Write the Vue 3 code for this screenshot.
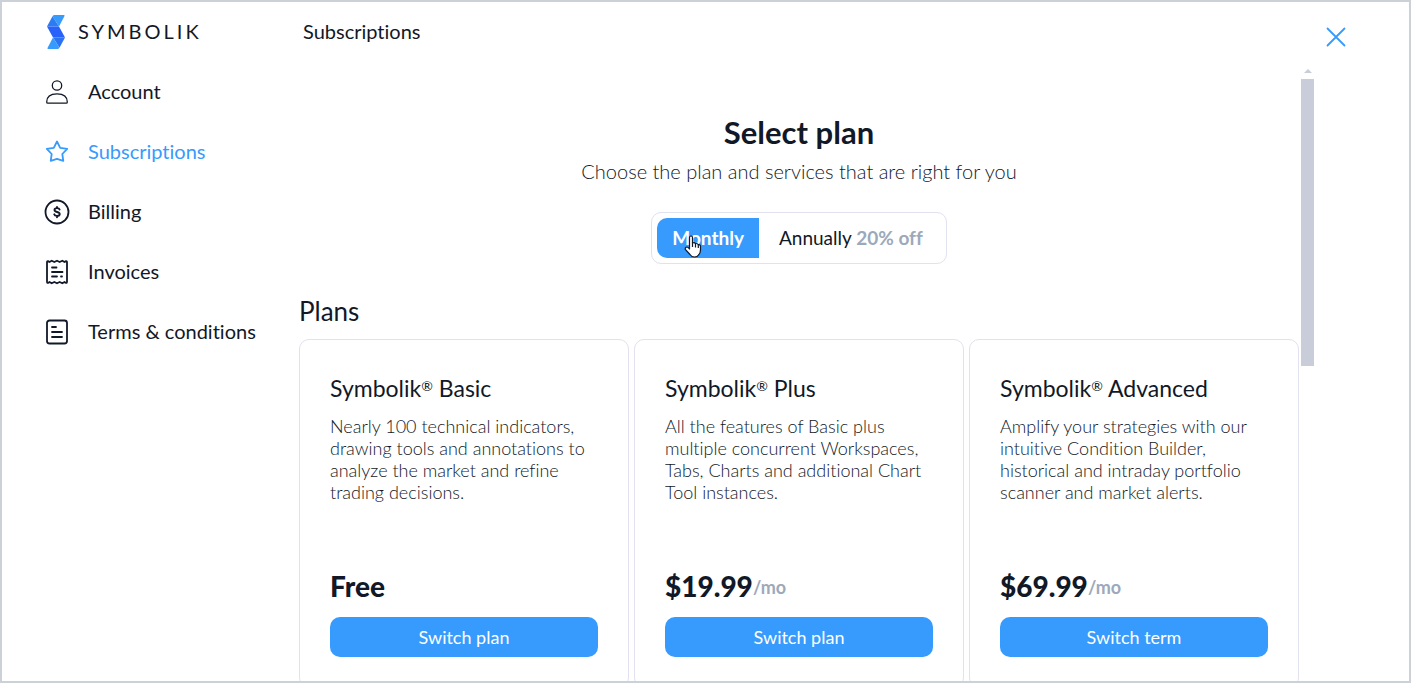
<script setup>
import { ref } from 'vue'

const term = ref('monthly')

const menu = [
  { id: 'account', label: 'Account' },
  { id: 'subscriptions', label: 'Subscriptions' },
  { id: 'billing', label: 'Billing' },
  { id: 'invoices', label: 'Invoices' },
  { id: 'terms', label: 'Terms & conditions' }
]
const active = ref('subscriptions')

const plans = [
  {
    name: 'Basic',
    lines: ['Nearly 100 technical indicators,', 'drawing tools and annotations to', 'analyze the market and refine', 'trading decisions.'],
    price: 'Free',
    unit: '',
    action: 'Switch plan'
  },
  {
    name: 'Plus',
    lines: ['All the features of Basic plus', 'multiple concurrent Workspaces,', 'Tabs, Charts and additional Chart', 'Tool instances.'],
    price: '$19.99',
    unit: '/mo',
    action: 'Switch plan'
  },
  {
    name: 'Advanced',
    lines: ['Amplify your strategies with our', 'intuitive Condition Builder,', 'historical and intraday portfolio', 'scanner and market alerts.'],
    price: '$69.99',
    unit: '/mo',
    action: 'Switch term'
  }
]
</script>

<template>
  <div class="window">
    <aside class="sidebar">
      <a class="brand" href="#">
        <svg width="20" height="34" viewBox="0 0 20 34" aria-hidden="true">
          <path d="M6.500 1.200Q7.200 0 8.500 0H17.800Q19 0 18.400 1.200L13 11.500Z" fill="#369bfc" />
          <path d="M6.500 1.200L13 11.500H1Z" fill="#2a7bf4" />
          <path d="M1 11.500H13L19 22.500H7Z" fill="#2962fb" />
          <path d="M7 22.500H19L13.500 32.800Z" fill="#2a74f4" />
          <path d="M7 22.500L13.500 32.800Q12.800 34 11.500 34H2.200Q1 34 1.600 32.800Z" fill="#369bfc" />
        </svg>
        <span class="wordmark">SYMBOLIK</span>
      </a>
      <nav class="menu">
        <a
          v-for="item in menu"
          :key="item.id"
          href="#"
          class="menu-item"
          :class="{ active: active === item.id }"
          @click.prevent="active = item.id"
        >
          <svg class="icon" width="26" height="26" viewBox="0 0 26 26" fill="none" stroke="currentColor" stroke-linecap="round" stroke-linejoin="round" aria-hidden="true">
            <g v-if="item.id === 'account'" stroke-width="1.300">
              <circle cx="13" cy="6.500" r="4.700" />
              <path d="M3.800 24.200Q2.700 24.200 2.700 23C2.700 17.500 7 14.800 13 14.800S23.300 17.500 23.300 23Q23.300 24.200 22.200 24.200Z" />
            </g>
            <path
              v-else-if="item.id === 'subscriptions'"
              stroke-width="1.800"
              d="M13 2.500L16.200 8.800 23.200 9.900 18.300 15 19.300 21.800 13 19.800 6.700 21.800 7.700 15 2.800 9.900 9.800 8.800Z"
            />
            <g v-else-if="item.id === 'billing'">
              <circle cx="13" cy="13" r="11.500" stroke-width="1.800" />
              <path stroke-width="1.900" d="M15.600 10.500C15.300 9.500 14.400 9.100 13 9.100C11.400 9.100 10.500 9.900 10.500 11C10.500 13.700 15.700 12.300 15.700 15C15.700 16.200 14.600 16.900 13 16.900C11.500 16.900 10.500 16.400 10.200 15.300M13 8V9M13 17V18.200" />
            </g>
            <g v-else-if="item.id === 'invoices'" stroke-width="1.800">
              <path d="M3 22.500V3.500Q3 1.800 4 2.100L5.500 3 7.700 1.700 10.300 3 13 1.700 15.700 3 18.300 1.700 20.500 3 22 2.100Q23 1.800 23 3.500V22.500Q23 24.200 22 23.900L20.500 23 18.300 24.300 15.700 23 13 24.300 10.300 23 7.700 24.300 5.500 23 4 23.900Q3 24.200 3 22.500Z" />
              <path d="M8 8.500H12.500M8 13H18.500M8 17.500H13M17 17.500H18" />
            </g>
            <g v-else stroke-width="1.800">
              <rect x="3" y="1.500" width="20" height="23" rx="2.500" />
              <path d="M8 8H12M8 13H18M8 18H18" />
            </g>
          </svg>
          <span class="menu-label">{{ item.label }}</span>
        </a>
      </nav>
    </aside>

    <main class="main">
      <header class="topbar">
        <h1 class="page-title">Subscriptions</h1>
        <button class="close" type="button" aria-label="Close">
          <svg width="20" height="20" viewBox="0 0 20 20" aria-hidden="true">
            <path d="M1.500 1.500L18.500 18.500M18.500 1.500L1.500 18.500" stroke="#369bfc" stroke-width="1.800" stroke-linecap="round" />
          </svg>
        </button>
      </header>

      <div class="scroller">
        <div class="content">
          <section class="intro">
            <h2 class="heading">Select plan</h2>
            <p class="lead">Choose the plan and services that are right for you</p>
            <div class="toggle">
              <button type="button" class="term" :class="{ on: term === 'monthly' }" @click="term = 'monthly'">
                Monthly
                <svg class="pointer" width="18" height="23" viewBox="0 0 18 23" aria-hidden="true">
                  <path d="M5.500 14V2.500Q5.500 1 7 1T8.500 2.500V8Q10.500 7 11.500 8.700Q13.500 8 14.300 9.700Q16.500 9.500 16.500 11.500V15Q16.500 18 14.500 20Q13.500 22 10.500 22Q7.500 22 6 19.500L1.300 14.300Q1 12 3 12Q4 12 5.500 14Z" fill="#fff" stroke="#111827" stroke-width="1.200" stroke-linejoin="round" />
                  <path d="M8.500 7.500V12M11.500 8.500V12.500M14.300 9.500V13" stroke="#111827" stroke-width="1.200" fill="none" />
                </svg>
              </button>
              <button type="button" class="term" :class="{ on: term === 'annually' }" @click="term = 'annually'">
                Annually <span class="discount">20% off</span>
              </button>
            </div>
          </section>

          <h2 class="section-title">Plans</h2>
          <div class="plans">
            <article v-for="plan in plans" :key="plan.name" class="card">
              <h3 class="plan-name">Symbolik<sup>®</sup> {{ plan.name }}</h3>
              <p class="description">
                <span v-for="line in plan.lines" :key="line" class="line">{{ line }}</span>
              </p>
              <p class="price">{{ plan.price }}<span class="unit">{{ plan.unit }}</span></p>
              <button type="button" class="action">{{ plan.action }}</button>
            </article>
          </div>
        </div>

        <div class="scrollbar" aria-hidden="true">
          <span class="arrow"></span>
          <span class="thumb"></span>
        </div>
      </div>
    </main>
  </div>
</template>

<style>
body {
  margin: 0;
}
</style>

<style scoped>
* {
  box-sizing: border-box;
}
h1, h2, h3, p {
  margin: 0;
  font-weight: 400;
}
button {
  font: inherit;
  border: 0;
  padding: 0;
  background: none;
  cursor: pointer;
}
a {
  color: inherit;
  text-decoration: none;
}
svg {
  display: block;
  flex: none;
}
.window {
  display: flex;
  height: 100vh;
  overflow: hidden;
  border: 2px solid #cbd1d6;
  background: #fff;
  color: #111827;
  font-family: Lato, "Open Sans", sans-serif;
  font-size: 20px;
  font-variant-ligatures: none;
}
.sidebar {
  flex: none;
  width: 297px;
  padding-left: 42px;
}
.brand {
  display: flex;
  align-items: center;
  gap: 12px;
  height: 60px;
  padding-left: 2px;
}
.wordmark {
  padding-bottom: 2px;
  font-size: 20px;
  line-height: 24px;
  letter-spacing: 3px;
}
.menu-item {
  display: flex;
  align-items: center;
  gap: 18px;
  height: 60px;
  line-height: 24px;
}
.menu-label {
  padding-bottom: 2px;
}
.menu-item.active {
  color: #369bfc;
}
.main {
  flex: 1;
  min-width: 0;
  display: flex;
  flex-direction: column;
}
.topbar {
  flex: none;
  display: flex;
  align-items: flex-start;
  justify-content: space-between;
  height: 64px;
  padding: 17px 63px 0 4px;
}
.page-title {
  font-size: 20px;
  line-height: 24px;
}
.close {
  padding-top: 8px;
}
.scroller {
  flex: 1;
  min-height: 0;
  display: flex;
  gap: 2px;
  padding-right: 95px;
}
.content {
  flex: 1;
  min-width: 0;
  overflow: hidden;
}
.intro {
  display: flex;
  flex-direction: column;
  align-items: center;
  padding-top: 48px;
}
.heading {
  font-size: 31px;
  line-height: 36px;
  font-weight: 700;
}
.lead {
  margin-top: 9px;
  font-size: 20px;
  line-height: 24px;
  font-weight: 300;
}
.toggle {
  display: flex;
  margin-top: 29px;
  padding: 5px;
  border: 1px solid #e1e1f0;
  border-radius: 10px;
}
.term {
  position: relative;
  height: 40px;
  padding: 0 18px 2px 20px;
  font-size: 19px;
  color: #111827;
}
.term.on {
  padding: 0 15px 2px;
  border-radius: 10px 0 0 10px;
  background: #369bfc;
  color: #fff;
  font-weight: 700;
}
.discount {
  color: #9ca9bb;
  font-weight: 700;
}
.pointer {
  position: absolute;
  left: 27px;
  top: 17px;
}
.section-title {
  margin: 32px 0 12px;
  font-size: 26px;
  line-height: 31px;
}
.plans {
  display: grid;
  grid-template-columns: repeat(3, 1fr);
  gap: 5px;
}
.card {
  display: flex;
  flex-direction: column;
  padding: 34px 30px 30px;
  border: 1px solid #e1e1f0;
  border-radius: 10px;
}
.plan-name {
  font-size: 23px;
  line-height: 28px;
}
.plan-name sup {
  font-size: 14px;
  line-height: 0;
  vertical-align: 6px;
}
.description {
  min-height: 144px;
  margin-top: 13px;
  font-size: 18px;
  line-height: 22px;
  font-weight: 300;
}
.line {
  display: block;
}
.price {
  margin-top: 9px;
  font-size: 28px;
  line-height: 36px;
  font-weight: 900;
}
.unit {
  color: #9ca9bb;
  font-size: 18px;
  font-weight: 700;
  vertical-align: 3px;
}
.action {
  height: 40px;
  margin-top: 12px;
  padding-bottom: 1px;
  border-radius: 10px;
  background: #369bfc;
  color: #fff;
  font-size: 18px;
}
.scrollbar {
  flex: none;
  display: flex;
  flex-direction: column;
  align-items: center;
  width: 13px;
}
.arrow {
  margin: 3px 0 6px;
  border: 4px solid transparent;
  border-top: 0;
  border-bottom-color: #c9ccd9;
}
.thumb {
  width: 100%;
  height: 287px;
  background: #c9ccd9;
}
</style>
